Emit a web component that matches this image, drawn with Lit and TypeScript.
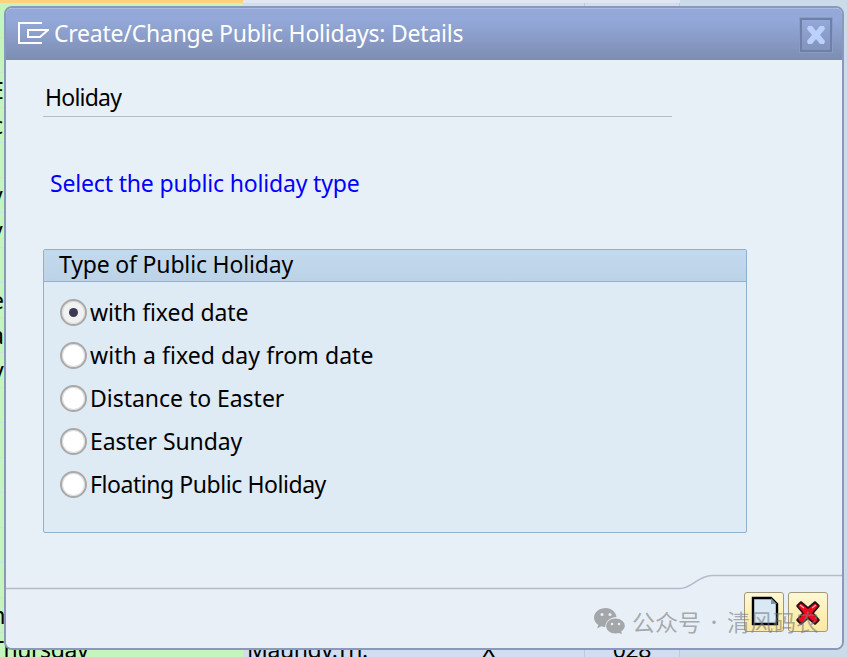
import { LitElement, html, css } from "lit";
import { customElement } from "lit/decorators.js";

const LEFT: [string, number][] = [
  ["", 0], ["", 0], ["E", -9], ["c", -8], ["", 0], ["v", -9], ["v", -9], ["", 0], ["e", -9], ["a", -9], ["y", -8],
  ["", 0], ["", 0], ["", 0], ["", 0], ["", 0], ["", 0], ["m", -16],
];

const OPTS: [string, number, boolean][] = [
  ["with fixed date", -0.07, true],
  ["with a fixed day from date", 0.08, false],
  ["Distance to Easter", -0.03, false],
  ["Easter Sunday", -0.08, false],
  ["Floating Public Holiday", -0.44, false],
];

@customElement("app-root")
export class AppRoot extends LitElement {
  static styles = css`
    :host {
      display: block;
      position: relative;
      width: 847px;
      height: 657px;
      overflow: hidden;
      font-family: "Noto Sans", "Open Sans", sans-serif;
      font-size: 23px;
      color: #000;
      background: #ccdbe9;
    }
    .sheet { display: grid; grid-template-columns: 243px 150px 192px 95px 1fr; grid-auto-rows: 35px; }
    .top { height: 3px; display: grid; grid-template-columns: 243px 437px 1fr; }
    .top .o { background: #fdd27e; }
    .top .w { background: #dfe8f2; }
    .c { overflow: hidden; white-space: nowrap; display: flex; align-items: center; line-height: 35px; box-sizing: border-box; }
    .g { background: #c3f5bd; border-bottom: 1px solid #d4dfe0; }
    .b { background: #d2deef; }
    .bl { background: #d2deef; border-right: 1px solid #bccadb; }
    .r { background: #ccdbe9; }
    .x { justify-content: center; }
    .mg { padding-left: 4px; }
    .last { margin-top: -2px; letter-spacing: -0.4px; }

    .win {
      position: absolute; left: 4px; top: 6px; width: 840px; height: 644px;
      box-sizing: border-box; border: 2px solid #8a99b9; border-radius: 8px;
      background: #e8f0f7; overflow: hidden; display: flex; flex-direction: column;
    }
    .title {
      height: 52px; flex: none; box-sizing: border-box; display: flex; align-items: center;
      padding: 0 10px 3px 12px; gap: 5px; color: #fff;
      background: linear-gradient(#94a9da 0, #94a9da 20%, #7d8db2 100%);
      border-top: 1px solid #a9bbe4;
    }
    .ttext { flex: 1; letter-spacing: -0.23px; }
    .tico { width: 31px; height: 23px; flex: none; }
    .close {
      width: 32px; height: 34px; flex: none; box-sizing: border-box; display: flex; align-items: center; justify-content: center;
      margin-top: 3px;
      border: 2px solid #6f80a8; outline: 1px solid #8b9cc4;
    }
    .close svg { width: 20px; height: 20px; }
    .main { flex: 1; padding: 22px 0 0 37px; }
    .hd { width: 629px; height: 35px; box-sizing: border-box; padding-left: 2px; border-bottom: 1px solid #b9bdc2; line-height: 30px; letter-spacing: -0.77px; }
    .info { color: #0000ff; margin: 50px 0 0 7px; line-height: 32px; height: 34px; letter-spacing: -0.17px; }
    .group {
      margin-top: 48px; width: 704px; height: 284px; box-sizing: border-box;
      border: 1px solid #8fb0cf; border-radius: 2px; background: #deeaf4;
    }
    .ghead { height: 32px; box-sizing: border-box; padding-left: 15px; line-height: 28px; letter-spacing: -0.17px; border-bottom: 1px solid #8fb0cf; background: linear-gradient(#c4d9ec, #bcd3e7); }
    .opts { display: flex; flex-direction: column; padding-top: 9px; }
    .opt { height: 43px; display: flex; align-items: center; padding-left: 16px; gap: 3px; }
    .opt-t { margin-top: -2px; }
    .radio {
      width: 27px; height: 27px; box-sizing: border-box; border-radius: 50%; flex: none;
      border: 2px solid #a9a9a9; background: #fff; box-shadow: inset 0 0 0 1px #dedede;
      display: flex; align-items: center; justify-content: center;
    }
    .radio.on { background: #f1f1f1; }
    .radio.on::after { content: ""; width: 9px; height: 9px; border-radius: 50%; background: #3a3a55; }

    .foot { height: 73px; flex: none; position: relative; background: #e9eff7; display: flex; justify-content: flex-end; gap: 4px; padding: 17px 14px 0 0; box-sizing: border-box; }
    .curve { position: absolute; left: 0; top: -1px; width: 836px; height: 18px; }
    .btn {
      width: 40px; height: 40px; box-sizing: border-box; border: 1px solid #a3977a; border-radius: 3px;
      background: linear-gradient(#fff8d6, #fdeeb0 60%, #fde9a4);
    }
    .btn svg { width: 38px; height: 38px; display: block; }
    .wm {
      position: absolute; left: 588px; top: 32px; display: flex; align-items: center; gap: 7px;
      color: rgba(120, 124, 128, 0.62); font-size: 23px; line-height: 28px; white-space: nowrap;
      font-family: "Noto Sans CJK SC", sans-serif;
    }
    .wm svg { width: 31px; height: 26px; flex: none; }
    .wmt { display: flex; }
    .sep { width: 26px; overflow: hidden; text-align: center; flex: none; font-size: 16px; }
  `;

  render() {
    return html`
      <div class="top"><div class="o"></div><div class="w"></div><div class="r"></div></div>
      <div class="sheet">
        ${LEFT.map(([t, i]) => html`
          <div class="c g"><span style="margin-left:${i}px">${t}</span></div>
          <div class="c b"></div>
          <div class="c bl"></div>
          <div class="c bl"></div>
          <div class="c r"></div>
        `)}
        <div class="c g"><span class="last" style="margin-left:-9px">Thursday</span></div>
        <div class="c b mg"><span class="last">Maundy.Th.</span></div>
        <div class="c bl x"><span class="last">X</span></div>
        <div class="c bl x"><span class="last">028</span></div>
        <div class="c r"></div>
      </div>

      <div class="win">
        <div class="title">
          <svg class="tico" viewBox="0 0 31 23" fill="none" stroke="#fff" stroke-width="2">
            <path d="M24 1H1V21H24" />
            <path d="M10 8V15H22L30 8Z" />
          </svg>
          <span class="ttext">Create/Change Public Holidays: Details</span>
          <div class="close">
            <svg viewBox="0 0 20 20"><path fill="#bcd0fc" d="M2 1H6L10 6L14 1H18L19 4L14 10L19 16L18 19H14L10 14L6 19H2L1 16L6 10L1 4Z" /></svg>
          </div>
        </div>
        <div class="main">
          <div class="hd">Holiday</div>
          <div class="info">Select the public holiday type</div>
          <div class="group">
            <div class="ghead">Type of Public Holiday</div>
            <div class="opts">
              ${OPTS.map(([t, ls, on]) => html`
                <div class="opt"><span class="radio ${on ? "on" : ""}"></span><span class="opt-t" style="letter-spacing:${ls}px">${t}</span></div>
              `)}
            </div>
          </div>
        </div>
        <div class="foot">
          <svg class="curve" viewBox="0 0 836 18" fill="none">
            <path d="M0 14.5H674C686 14.5 692 1.5 706 1.5H836" stroke="#b3bccb" stroke-width="1.4" />
          </svg>
          <div class="btn">
            <svg viewBox="0 0 38 38">
              <path d="M8 5H26L32 11V31H8Z" fill="#d8e8f5" stroke="#000" stroke-width="2.4" />
              <path d="M26 5V11H32Z" fill="#7f95ac" />
            </svg>
          </div>
          <div class="btn">
            <svg viewBox="0 0 38 38">
              <path d="M8 13L12 9L19 15L26 9L30 13L24 20L30 27L26 31L19 25L12 31L8 27L14 20Z" fill="#ee0a22" stroke="#2a1414" stroke-width="1.8" stroke-linejoin="bevel" />
              <path d="M11 12L15 15M27 12L23 15" stroke="#ffb0b0" stroke-width="1.2" />
            </svg>
          </div>
          <div class="wm">
            <svg viewBox="0 0 31 26" fill="#a3a7aa">
              <path d="M12 0C5.4 0 0 4.2 0 9.6C0 12.6 1.7 15.2 4.3 17L3.2 20.4L7.2 18.3C8.6 18.8 10 19 11.4 19.1C10.9 14 15.5 9 22.6 8.9C21.4 3.8 17.2 0 12 0Z" />
              <path d="M21.5 10.5C16.2 10.5 12.2 13.9 12.2 18C12.2 22.1 16.2 25.5 21.5 25.5C22.7 25.5 23.8 25.3 24.8 25L28 26L27.2 23.3C29.4 21.9 30.8 20 30.8 18C30.8 13.9 26.7 10.5 21.5 10.5Z" />
              <circle cx="8" cy="6.5" r="1.5" fill="#e9eff7" /><circle cx="16" cy="6.5" r="1.5" fill="#e9eff7" />
              <circle cx="18" cy="16" r="1.3" fill="#e9eff7" /><circle cx="25" cy="16" r="1.3" fill="#e9eff7" />
            </svg>
            <div class="wmt"><span>公众号</span><span class="sep">·</span><span>清风码农</span></div>
          </div>
        </div>
      </div>
    `;
  }
}
